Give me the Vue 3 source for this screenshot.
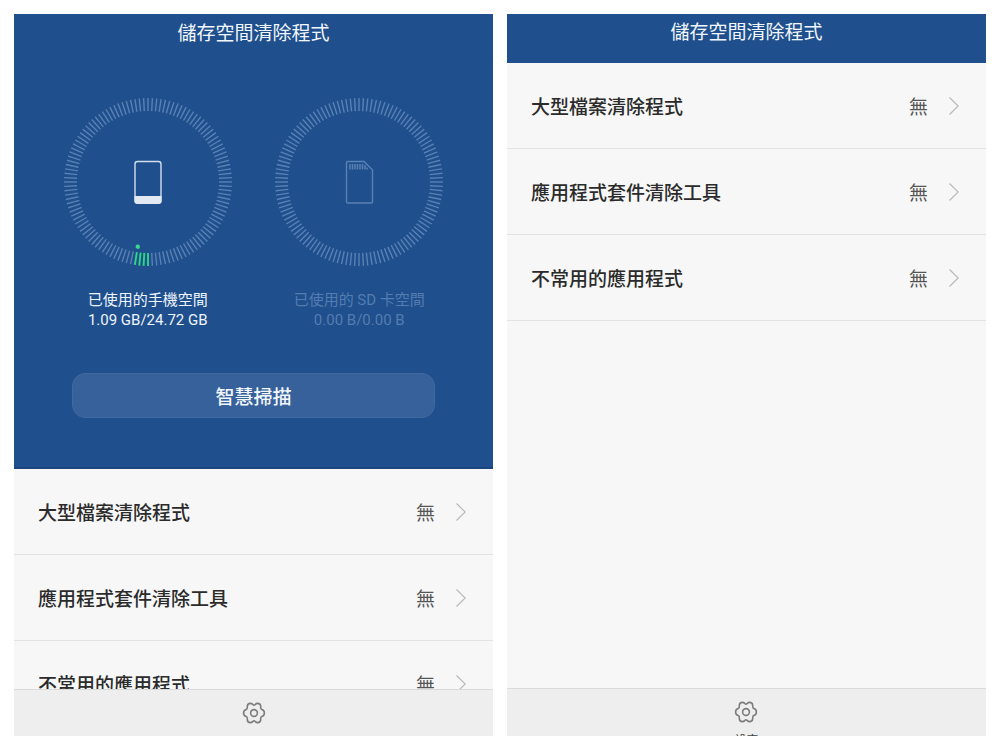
<script setup>
const title = '儲存空間清除程式'
const none = '無'
const items = ['大型檔案清除程式', '應用程式套件清除工具', '不常用的應用程式']

const TICKS = 120
const ticks = Array.from({ length: TICKS }, (_, i) => i * (360 / TICKS))

const gauges = [
  { kind: 'phone', label: '已使用的手機空間', value: '1.09 GB/24.72 GB', used: 4 },
  { kind: 'card', label: '已使用的 SD 卡空間', value: '0.00 B/0.00 B', used: 0 },
]

// Outline of the settings cog: six rounded lobes around the centre.
const cog =
  'M0 -7.8C1.2 -7.8 1.6 -9.6 3.4 -9.6C5.6 -9.6 6.7 -8.4 6.7 -6.4C6.7 -4.8 6.4 -4 7.8 -3.6' +
  'C9.6 -3.1 10.4 -1.8 10.4 0C10.4 1.8 9.6 3.1 7.8 3.6C6.4 4 6.7 4.8 6.7 6.4' +
  'C6.7 8.4 5.6 9.6 3.4 9.6C1.6 9.6 1.2 7.8 0 7.8C-1.2 7.8 -1.6 9.6 -3.4 9.6' +
  'C-5.6 9.6 -6.7 8.4 -6.7 6.4C-6.7 4.8 -6.4 4 -7.8 3.6C-9.6 3.1 -10.4 1.8 -10.4 0' +
  'C-10.4 -1.8 -9.6 -3.1 -7.8 -3.6C-6.4 -4 -6.7 -4.8 -6.7 -6.4C-6.7 -8.4 -5.6 -9.6 -3.4 -9.6' +
  'C-1.6 -9.6 -1.2 -7.8 0 -7.8Z'
</script>

<template>
  <main class="board">
    <section class="screen">
      <div class="hero">
        <h1 class="title">{{ title }}</h1>
        <div class="gauges">
          <div v-for="g in gauges" :key="g.kind" class="gauge" :class="g.kind">
            <svg class="ring" viewBox="-84 -84 168 168" aria-hidden="true">
              <line
                v-for="(deg, i) in ticks"
                :key="deg"
                class="tick"
                :class="{ used: i < g.used }"
                x1="0" y1="71" x2="0" y2="84"
                :transform="`rotate(${deg})`"
              />
              <circle v-if="g.used" class="dot" cx="0" cy="65.5" r="2.2" transform="rotate(9)" />
              <g v-if="g.kind === 'phone'">
                <rect class="stroke" x="-13" y="-20.5" width="26" height="41.5" rx="2.5" />
                <path class="solid" d="M-13.5 14H13.5V19Q13.5 22 10.5 22H-10.5Q-13.5 22 -13.5 19Z" />
              </g>
              <g v-else>
                <path class="stroke" d="M-11.5 -20.5H5L13.5 -12V19.5Q13.5 21 12 21H-11Q-12.5 21 -12.5 19.5V-19.5Q-12.5 -20.5 -11.5 -20.5Z" />
                <path class="pins" d="M-9 -18V-12.5M-6.5 -18V-12.5M-4 -18V-12.5M-1.5 -18V-12.5M1 -18V-12.5M3.5 -18V-12.5M6 -17V-12.5M8 -14.5V-12.5" />
              </g>
            </svg>
            <p class="caption">{{ g.label }}<br />{{ g.value }}</p>
          </div>
        </div>
        <button class="scan" type="button">智慧掃描</button>
      </div>
      <ul class="list">
        <li v-for="item in items" :key="item">
          <button class="row" type="button">
            <span class="name">{{ item }}</span>
            <span class="state">{{ none }}</span>
            <svg class="chevron" viewBox="0 0 10 18" aria-hidden="true"><path d="M0.5 0.5L9.2 9L0.5 17.5" /></svg>
          </button>
        </li>
      </ul>
      <footer class="bar">
        <button class="settings" type="button" aria-label="設定">
          <svg class="cog" viewBox="-12 -12 24 24" aria-hidden="true">
            <path :d="cog" />
            <circle r="3.4" />
          </svg>
        </button>
      </footer>
    </section>

    <section class="screen">
      <header class="head">
        <h2 class="title">{{ title }}</h2>
      </header>
      <ul class="list">
        <li v-for="item in items" :key="item">
          <button class="row" type="button">
            <span class="name">{{ item }}</span>
            <span class="state">{{ none }}</span>
            <svg class="chevron" viewBox="0 0 10 18" aria-hidden="true"><path d="M0.5 0.5L9.2 9L0.5 17.5" /></svg>
          </button>
        </li>
      </ul>
      <footer class="bar tall">
        <button class="settings" type="button">
          <svg class="cog" viewBox="-12 -12 24 24" aria-hidden="true">
            <path :d="cog" />
            <circle r="3.4" />
          </svg>
          <span class="hint">設定</span>
        </button>
      </footer>
    </section>
  </main>
</template>

<style>
body {
  margin: 0;
  background: #fff;
}
</style>

<style scoped>
.board {
  box-sizing: border-box;
  height: 100vh;
  padding: 14px;
  display: grid;
  grid-template-columns: 1fr 1fr;
  gap: 14px;
  font-family: "Noto Sans CJK TC", sans-serif;
}
button {
  font: inherit;
  border: 0;
  padding: 0;
  background: none;
  cursor: pointer;
}
.screen {
  display: flex;
  flex-direction: column;
  min-height: 0;
  overflow: hidden;
  background: #f7f7f7;
}
.hero {
  flex: none;
  box-sizing: border-box;
  padding: 6px 28px 49px;
  background: #1f4f8c;
  border-bottom: 2px solid #1d4580;
}
.head {
  flex: none;
  padding: 5px 0 20px;
  background: #1f4f8c;
}
.title {
  margin: 0;
  color: #f2f7fd;
  font-size: 19px;
  line-height: 24px;
  font-weight: 400;
  text-align: center;
}
.gauges {
  display: grid;
  grid-template-columns: 1fr 1fr;
  margin-top: 54px;
}
.gauge {
  display: flex;
  flex-direction: column;
  align-items: center;
  gap: 24px;
}
.ring {
  width: 168px;
  height: 168px;
}
.tick {
  stroke: #5a81b4;
  stroke-width: 1.4;
}
.tick.used {
  stroke: #2fd687;
  stroke-width: 1.9;
}
.dot {
  fill: #3cd690;
}
.stroke {
  fill: none;
  stroke: #d3deee;
  stroke-width: 1.4;
}
.solid {
  fill: #e2e9f3;
}
.card .stroke {
  stroke: #5a81b4;
}
.pins {
  stroke: #5a81b4;
  stroke-width: 1.5;
}
.caption {
  margin: 0;
  color: #eef4fb;
  font-family: Roboto, "Noto Sans CJK TC", sans-serif;
  font-size: 15px;
  line-height: 20px;
  text-align: center;
  white-space: nowrap;
}
.card .caption {
  color: #557cb0;
}
.scan {
  display: block;
  box-sizing: border-box;
  width: calc(100% - 60px);
  margin: 43px 30px 0;
  height: 45px;
  border: 1px solid #4068a1;
  border-radius: 13px;
  background: #37619b;
  color: #f2f7fd;
  font-size: 19px;
  font-weight: 500;
  line-height: 24px;
}
.list {
  flex: 1;
  min-height: 0;
  overflow: hidden;
  margin: 0;
  padding: 0;
  list-style: none;
}
.row {
  box-sizing: border-box;
  display: flex;
  align-items: center;
  width: 100%;
  height: 86px;
  padding: 0 27px 0 24px;
  border-bottom: 1px solid #e2e2e2;
  font-size: 19px;
  line-height: 28px;
  text-align: left;
}
.name {
  flex: 1;
  color: #2b2b2b;
  font-weight: 500;
}
.state {
  color: #555;
  margin-right: 21px;
}
.chevron {
  width: 10px;
  height: 18px;
  fill: none;
  stroke: #b9b9b9;
  stroke-width: 1.2;
}
.bar {
  flex: none;
  box-sizing: border-box;
  height: 47px;
  overflow: hidden;
  border-top: 1px solid #dadada;
  background: #eeeeee;
  display: flex;
  justify-content: center;
  align-items: flex-start;
}
.bar.tall {
  height: 48px;
}
.settings {
  display: flex;
  flex-direction: column;
  align-items: center;
  padding-top: 11px;
}
.cog {
  width: 24px;
  height: 24px;
  fill: none;
  stroke: #7c7c7c;
  stroke-width: 1.6;
  stroke-linejoin: round;
}
.hint {
  margin-top: 6px;
  color: #444;
  font-size: 12px;
  line-height: 20px;
}
</style>
